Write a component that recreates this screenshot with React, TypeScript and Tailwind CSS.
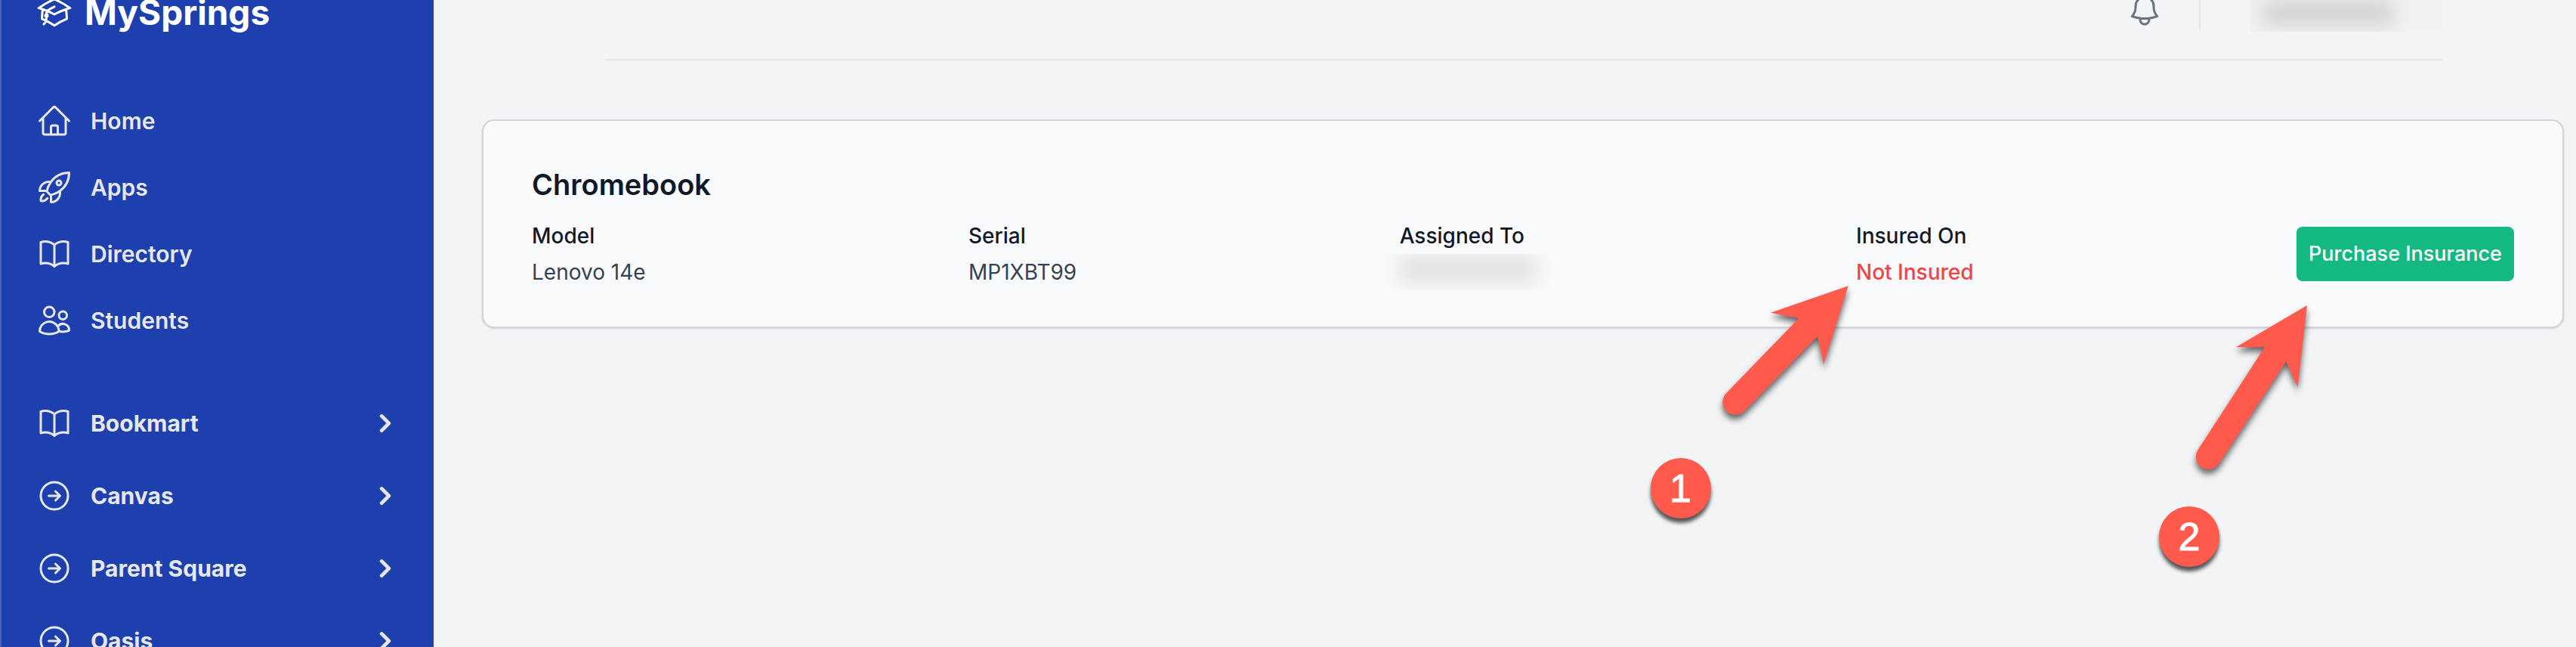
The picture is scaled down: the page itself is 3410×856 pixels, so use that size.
import type { ReactNode } from "react";
import {
  HiOutlineAcademicCap,
  HiOutlineArrowRightCircle,
  HiOutlineBell,
  HiOutlineBookOpen,
  HiOutlineHome,
  HiOutlineRocketLaunch,
  HiOutlineUsers,
} from "react-icons/hi2";
import { HiChevronRight } from "react-icons/hi";
import type { IconType } from "react-icons";

const mainLinks: { label: string; icon: IconType }[] = [
  { label: "Home", icon: HiOutlineHome },
  { label: "Apps", icon: HiOutlineRocketLaunch },
  { label: "Directory", icon: HiOutlineBookOpen },
  { label: "Students", icon: HiOutlineUsers },
];

const groups: { label: string; icon: IconType }[] = [
  { label: "Bookmart", icon: HiOutlineBookOpen },
  { label: "Canvas", icon: HiOutlineArrowRightCircle },
  { label: "Parent Square", icon: HiOutlineArrowRightCircle },
  { label: "Oasis", icon: HiOutlineArrowRightCircle },
];

function Sidebar() {
  return (
    <aside className="w-[574px] shrink-0 overflow-hidden border-l-2 border-[#4963bc] bg-[#1e40af] text-[30px] text-[#e5e7eb]">
      <a href="#" className="-mt-2 ml-[46px] flex h-12 items-center gap-4 text-white">
        <HiOutlineAcademicCap className="size-12" />
        <span className="text-[46px] leading-[48px] font-bold">MySprings</span>
      </a>
      <nav aria-label="Main" className="mt-20 flex flex-col gap-2 px-[46px]">
        {mainLinks.map(({ label, icon: Icon }) => (
          <a key={label} href="#" className="flex h-20 items-center gap-6 font-semibold">
            <Icon className="size-12" />
            {label}
          </a>
        ))}
      </nav>
      <nav aria-label="Services" className="mt-14 flex flex-col gap-4 pr-10 pl-[46px]">
        {groups.map(({ label, icon: Icon }) => (
          <button key={label} type="button" className="flex h-20 items-center gap-6 text-left font-bold">
            <Icon className="size-12" />
            <span className="flex-1">{label}</span>
            <HiChevronRight className="size-12" />
          </button>
        ))}
      </nav>
    </aside>
  );
}

function Header() {
  return (
    <header className="pl-12">
      <div className="mx-auto max-w-[2560px] px-16">
        <div className="flex h-20 items-start justify-end border-b-2 border-[#e5e7eb]">
          <button type="button" aria-label="Notifications" className="-mt-[10px] mr-12 text-[#6b7280]">
            <HiOutlineBell className="size-12" />
          </button>
          <div className="mr-[66px] h-[39px] w-[2px] bg-[#e5e7eb]" />
          <div className="h-[42px] w-[254px] overflow-hidden bg-[#f1f2f4]">
            <div className="mr-16 ml-4 h-[34px] bg-[#d2d3d5] blur-[12px]" />
          </div>
        </div>
      </div>
    </header>
  );
}

function Field({ label, className = "", children }: { label: string; className?: string; children: ReactNode }) {
  return (
    <div className={`relative ${className}`}>
      <dt className="font-medium text-[#111827]">{label}</dt>
      <dd className="text-[#374151]">{children}</dd>
    </div>
  );
}

function Arrow({ d, className }: { d: string; className: string }) {
  return (
    <svg viewBox="0 0 160 230" aria-hidden="true" className={`absolute h-[230px] w-[160px] overflow-visible drop-shadow-[0_6px_4px_rgba(0,0,0,0.6)] ${className}`}>
      <path d={d} fill="#ff5a4c" />
    </svg>
  );
}

function Badge({ value, className }: { value: string; className: string }) {
  return (
    <span className={`absolute flex size-20 items-center justify-center rounded-full bg-[#ff5a4c] font-['Liberation_Sans',sans-serif] text-[52px] leading-none font-normal text-white shadow-[0_6px_5px_rgba(0,0,0,0.65)] [-webkit-text-stroke:1px_white] ${className}`}>
      {value}
    </span>
  );
}

export default function App() {
  return (
    <div className="flex h-screen overflow-hidden bg-[#f3f4f6] font-['Inter','Liberation_Sans',sans-serif] text-[28px] leading-[48px]">
      <Sidebar />
      <main className="min-w-0 flex-1 border-l-2 border-[#ebecef]">
        <Header />
        <section className="mt-[78px] mr-4 ml-[62px] rounded-2xl border-2 border-[#d1d5db] bg-[#f9fafc] px-16 py-12 shadow-sm">
          <h2 className="text-[38px] leading-[72px] font-semibold text-[#111827]">Chromebook</h2>
          <dl className="mt-2 flex items-center justify-between">
            <Field label="Model">Lenovo 14e</Field>
            <Field label="Serial">MP1XBT99</Field>
            <Field label="Assigned To" className="w-[177px]">
              <div className="-mr-6 -ml-5 h-12 overflow-hidden">
                <div className="mx-5 h-10 bg-[#e2e3e5] blur-[12px]" />
              </div>
            </Field>
            <Field label="Insured On">
              <span className="font-medium text-[#ef4444]">Not Insured</span>
              <Arrow
                className="top-[90px] right-[164px]"
                d="M157.700 0.300L55 35.700L92.300 43L-3.700 142A16.500 16.500 0 0 0 20 166L117 67L125 104Z"
              />
              <Badge value="1" className="top-[318px] right-[348px]" />
            </Field>
            <div className="relative">
              <button type="button" className="h-[72px] rounded-lg bg-[#14b881] px-4 text-[27px] font-medium text-white">
                Purchase Insurance
              </button>
              <Arrow
                className="top-[104px] -left-[142px]"
                d="M156 0L62 55.300H100L11 192A16.500 16.500 0 0 0 40 208.500L128.300 74.300L143.600 108.300Z"
              />
              <Badge value="2" className="top-[370px] -left-[182px]" />
            </div>
          </dl>
        </section>
      </main>
    </div>
  );
}
